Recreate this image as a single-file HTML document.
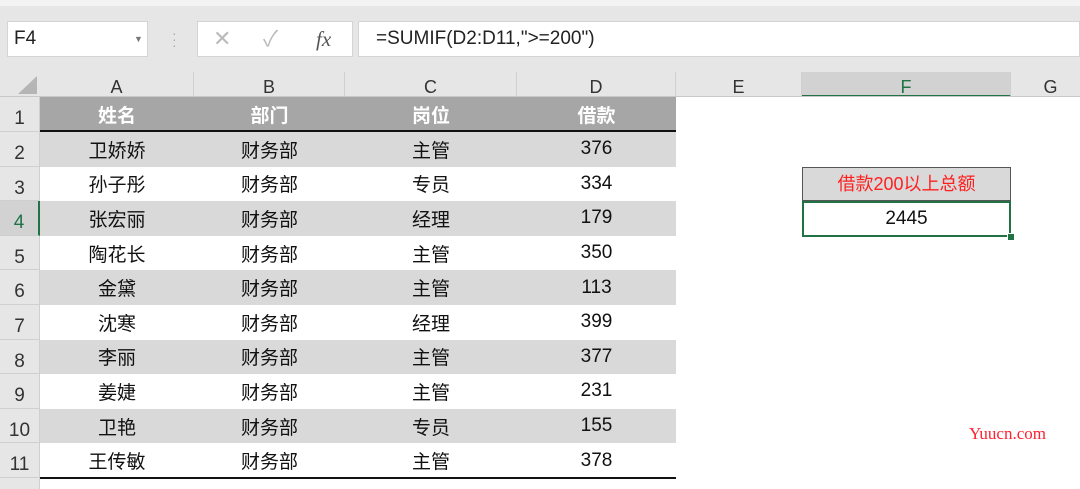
<!DOCTYPE html><html><head><meta charset="utf-8"><style>
html,body{margin:0;width:1080px;height:489px;overflow:hidden}
body{background:#fff;font-family:"Liberation Sans","Noto Sans CJK SC",sans-serif;position:relative}
.a{position:absolute}
.top{left:0;top:0;width:1080px;height:97px;background:#e6e6e6}
.box{background:#fff;border:1px solid #d4d4d4;box-sizing:border-box}
.ch{top:72px;height:25px;font-size:18px;color:#333;text-align:center;line-height:30px;border-right:1px solid #d0d0d0;box-sizing:border-box}
.rh{left:0;width:40px;background:#e6e6e6;border-bottom:1px solid #cfcfcf;border-right:1px solid #cfcfcf;box-sizing:border-box;font-size:19px;color:#333;text-align:center;padding-top:11px}
.row{left:40px;width:636px;display:flex;font-size:19px;color:#111;align-items:center}
.row div{text-align:center}
.c1{width:154px}.c2{width:151px}.c3{width:172px}.c4{width:159px}
.g{background:#d9d9d9}
.h{background:#a6a6a6;color:#fff;font-weight:bold}
</style></head><body>
<div class="a top"></div>
<div class="a" style="left:0;top:0;width:1080px;height:6px;background:#f3f3f3"></div>
<div class="a box" style="left:7px;top:21px;width:141px;height:36px;font-size:19px;line-height:34px;padding-left:6px;color:#222">F4<span style="position:absolute;left:126px;top:0;font-size:9px;color:#777">▼</span></div>
<div class="a" style="left:172px;top:30px;color:#aaa;font-size:14px;line-height:6px">·<br>·<br>·</div>
<div class="a box" style="left:197px;top:21px;width:156px;height:36px;color:#bbb;font-size:22px;line-height:34px"><span style="position:absolute;left:15px">✕</span><span style="position:absolute;left:65px">✓</span><span style="position:absolute;left:118px;color:#555;font-family:'Liberation Serif',serif;font-style:italic;font-size:21px">fx</span></div>
<div class="a box" style="left:358px;top:21px;width:722px;height:36px;font-size:19px;line-height:34px;padding-left:17px;color:#222">=SUMIF(D2:D11,"&gt;=200")</div>
<div class="a" style="left:0;top:72px;width:40px;height:25px;background:#e6e6e6"></div>
<div class="a" style="left:18px;top:76px;width:0;height:0;border-left:19px solid transparent;border-bottom:18px solid #b5b5b5"></div>
<div class="a ch" style="left:40px;width:154px">A</div>
<div class="a ch" style="left:194px;width:151px">B</div>
<div class="a ch" style="left:345px;width:172px">C</div>
<div class="a ch" style="left:517px;width:159px">D</div>
<div class="a ch" style="left:676px;width:126px">E</div>
<div class="a ch" style="left:802px;width:209px;background:#d2d2d2;color:#217346;border-bottom:2px solid #217346">F</div>
<div class="a ch" style="left:1011px;width:80px">G</div>
<div class="a" style="left:0;top:96px;width:1080px;height:1px;background:#c8c8c8"></div>

<div class="a rh" style="top:97px;height:35px">1</div>
<div class="a rh" style="top:132px;height:34.6px">2</div>
<div class="a rh" style="top:166.6px;height:34.6px">3</div>
<div class="a rh" style="top:201.2px;height:34.6px;background:#d2d2d2;color:#217346;border-right:2px solid #217346">4</div>
<div class="a rh" style="top:235.8px;height:34.6px">5</div>
<div class="a rh" style="top:270.4px;height:34.6px">6</div>
<div class="a rh" style="top:305px;height:34.6px">7</div>
<div class="a rh" style="top:339.6px;height:34.6px">8</div>
<div class="a rh" style="top:374.2px;height:34.6px">9</div>
<div class="a rh" style="top:408.8px;height:34.6px">10</div>
<div class="a rh" style="top:443.4px;height:34.6px">11</div>
<div class="a rh" style="top:478px;height:11px;border-bottom:none;padding:0"></div>

<div class="a row h" style="top:97px;height:34px"><div class="c1">姓名</div><div class="c2">部门</div><div class="c3">岗位</div><div class="c4">借款</div></div>
<div class="a" style="left:40px;top:130px;width:636px;height:2px;background:#111"></div>
<div class="a row g" style="top:132px;height:34.6px"><div class="c1">卫娇娇</div><div class="c2">财务部</div><div class="c3">主管</div><div class="c4">376</div></div>
<div class="a row" style="top:166.6px;height:34.6px"><div class="c1">孙子彤</div><div class="c2">财务部</div><div class="c3">专员</div><div class="c4">334</div></div>
<div class="a row g" style="top:201.2px;height:34.6px"><div class="c1">张宏丽</div><div class="c2">财务部</div><div class="c3">经理</div><div class="c4">179</div></div>
<div class="a row" style="top:235.8px;height:34.6px"><div class="c1">陶花长</div><div class="c2">财务部</div><div class="c3">主管</div><div class="c4">350</div></div>
<div class="a row g" style="top:270.4px;height:34.6px"><div class="c1">金黛</div><div class="c2">财务部</div><div class="c3">主管</div><div class="c4">113</div></div>
<div class="a row" style="top:305px;height:34.6px"><div class="c1">沈寒</div><div class="c2">财务部</div><div class="c3">经理</div><div class="c4">399</div></div>
<div class="a row g" style="top:339.6px;height:34.6px"><div class="c1">李丽</div><div class="c2">财务部</div><div class="c3">主管</div><div class="c4">377</div></div>
<div class="a row" style="top:374.2px;height:34.6px"><div class="c1">姜婕</div><div class="c2">财务部</div><div class="c3">主管</div><div class="c4">231</div></div>
<div class="a row g" style="top:408.8px;height:34.6px"><div class="c1">卫艳</div><div class="c2">财务部</div><div class="c3">专员</div><div class="c4">155</div></div>
<div class="a row" style="top:443.4px;height:34.6px"><div class="c1">王传敏</div><div class="c2">财务部</div><div class="c3">主管</div><div class="c4">378</div></div>
<div class="a" style="left:40px;top:477px;width:636px;height:2px;background:#111"></div>

<div class="a" style="left:802px;top:167px;width:209px;height:34px;background:#d9d9d9;border:1px solid #555;box-sizing:border-box;color:#ff2020;font-size:18px;text-align:center;line-height:32px">借款200以上总额</div>
<div class="a" style="left:802px;top:201px;width:209px;height:36px;border:2px solid #217346;box-sizing:border-box;font-size:19px;text-align:center;line-height:31px;color:#111">2445</div>
<div class="a" style="left:1007px;top:233px;width:6px;height:6px;background:#217346;border:1px solid #fff"></div>
<div class="a" style="left:969px;top:424px;color:#ff2030;font-family:'Liberation Serif',serif;font-size:17px">Yuucn.com</div>
</body></html>
